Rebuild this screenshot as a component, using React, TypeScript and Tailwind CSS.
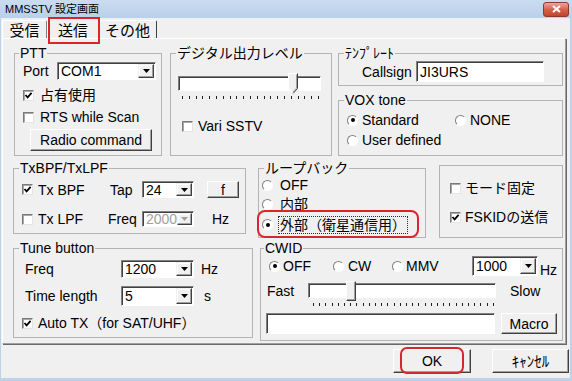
import React from "react";

const FONT = "font-['Liberation_Sans','Noto_Sans_CJK_JP',sans-serif]";

function CheckBox({ checked }: { checked?: boolean }) {
  return (
    <span className="flex h-[11px] w-[11px] shrink-0 items-center justify-center border border-t-[#7a7a7a] border-l-[#7a7a7a] border-r-[#e4e4e4] border-b-[#e4e4e4] bg-white shadow-[inset_1px_1px_0_#a8a8a8]">
      {checked && (
        <svg width="9" height="9" viewBox="0 0 9 9">
          <path d="M1.5 4 L3.6 6.3 L7.6 1.8" fill="none" stroke="#000" strokeWidth="1.8" />
        </svg>
      )}
    </span>
  );
}

function Radio({ checked }: { checked?: boolean }) {
  return (
    <span className="flex h-[11px] w-[11px] shrink-0 items-center justify-center rounded-full border border-t-[#808080] border-l-[#808080] border-r-[#ffffff] border-b-[#ffffff] bg-white">
      {checked && <span className="h-[4px] w-[4px] rounded-full bg-black" />}
    </span>
  );
}

function Combo({ value, className, disabled }: { value: string; className: string; disabled?: boolean }) {
  return (
    <div
      className={`flex shrink-0 border border-t-[#808080] border-l-[#808080] border-r-white border-b-white bg-white p-[1px] shadow-[inset_1px_1px_0_#404040] ${className}`}
    >
      <div className={`flex flex-1 items-center pl-[2px] ${disabled ? "text-[#a0a0a0]" : ""}`}>{value}</div>
      <div className="flex w-[16px] items-center justify-center border border-t-[#f0f0f0] border-l-[#f0f0f0] border-r-[#404040] border-b-[#404040] bg-[#f0f0f0] shadow-[inset_-1px_-1px_0_#a0a0a0,inset_1px_1px_0_#ffffff]">
        <svg width="7" height="4" viewBox="0 0 7 4">
          <path d="M0 0H7L3.5 4Z" fill={disabled ? "#a0a0a0" : "#000"} />
        </svg>
      </div>
    </div>
  );
}

function TextBox({ value, className }: { value: string; className: string }) {
  return (
    <div
      className={`flex shrink-0 items-center border border-t-[#808080] border-l-[#808080] border-r-white border-b-white bg-white pl-[3px] shadow-[inset_1px_1px_0_#404040] ${className}`}
    >
      {value}
    </div>
  );
}

function Btn({ children, className }: { children: React.ReactNode; className: string }) {
  return (
    <div
      className={`flex shrink-0 items-center justify-center border border-t-white border-l-white border-r-[#404040] border-b-[#404040] bg-[#f0f0f0] shadow-[inset_-1px_-1px_0_#a0a0a0] ${className}`}
    >
      {children}
    </div>
  );
}

function Group({
  label,
  className,
  lm,
  children,
}: {
  label: string;
  className: string;
  lm: string;
  children?: React.ReactNode;
}) {
  return (
    <fieldset className={`shrink-0 border border-[#b4b4b4] ${className}`}>
      <legend className={`px-[1px] text-[14px] leading-[14px] ${lm}`}>{label}</legend>
      {children}
    </fieldset>
  );
}

function Ticks({ n, className }: { n: number; className: string }) {
  return (
    <div className={`flex justify-between ${className}`}>
      {Array.from({ length: n }).map((_, i) => (
        <span key={i} className="h-[3px] w-[1px] bg-[#202020]" />
      ))}
    </div>
  );
}

export default function App() {
  return (
    <div
      className={`relative flex h-[381px] w-[572px] flex-col overflow-hidden bg-[#bcd2ea] text-[14px] leading-none text-black ${FONT}`}
    >
      {/* title bar */}
      <div className="flex h-[18px] shrink-0 items-center justify-between bg-gradient-to-b from-[#cadcf0] to-[#b9d0ea] pl-[5px] pr-[3px]">
        <span className="text-[11px] leading-[11px]">MMSSTV 設定画面</span>
        <div className="flex h-[15px] w-[26px] items-center justify-center rounded-[3px] border border-[#8a3a2e] bg-gradient-to-b from-[#eaa898] via-[#d3634c] to-[#c4432b]">
          <svg width="9" height="8" viewBox="0 0 9 8">
            <path d="M1 1 L8 7 M8 1 L1 7" stroke="#fff" strokeWidth="2" />
          </svg>
        </div>
      </div>

      {/* body */}
      <div className="ml-[1px] mr-[2px] flex h-[360px] flex-col bg-[#f0f0f0]">
        {/* tabs */}
        <div className="flex h-[20px] shrink-0 items-end">
          <div className="ml-[1px] flex h-[18px] w-[45px] items-center justify-center rounded-t-[2px] border-t border-l border-r border-t-white border-l-white border-r-[#808080] pt-[2px] text-[15px] leading-[15px]">
            受信
          </div>
          <div className="flex h-[20px] w-[52px] items-center justify-center rounded-t-[2px] border-t border-l border-r border-t-white border-l-white border-r-[#808080] pt-[3px] text-[15px] leading-[15px]">
            送信
          </div>
          <div className="flex h-[18px] w-[58px] items-center justify-center rounded-t-[2px] border-t border-r border-t-white border-r-[#404040] pt-[2px] text-[15px] leading-[15px]">
            その他
          </div>
        </div>

        {/* tab page */}
        <div className="ml-[1px] flex h-[306px] w-[564px] shrink-0 flex-col border border-t-white border-l-white border-r-[#a0a0a0] border-b-[#a0a0a0] shadow-[1px_1px_0_#696969]">
          {/* row 1 */}
          <div className="mt-[7px] flex items-start">
            <Group label="PTT" lm="ml-[4px]" className="ml-[11px] h-[110px] w-[148px]">
              <div className="mt-[2px] flex h-[18px] items-center pl-[8px]">
                <span className="w-[34px]">Port</span>
                <Combo className="h-[18px] w-[99px]" value="COM1" />
              </div>
              <div className="mt-[7px] flex h-[16px] items-center gap-[6px] pl-[8px]">
                <CheckBox checked />
                <span>占有使用</span>
              </div>
              <div className="mt-[6px] flex h-[16px] items-center gap-[6px] pl-[8px]">
                <CheckBox />
                <span>RTS while Scan</span>
              </div>
              <Btn className="ml-[15px] mt-[4px] h-[22px] w-[122px]">Radio command</Btn>
            </Group>

            <Group label="デジタル出力レベル" lm="ml-[5px]" className="ml-[8px] h-[110px] w-[162px]">
              <div className="relative ml-[7px] mt-[16px] h-[15px] w-[143px] border border-t-[#808080] border-l-[#808080] border-r-white border-b-white bg-white shadow-[inset_1px_1px_0_#404040]">
                <div className="absolute left-[109px] top-[-4px]">
                  <svg width="10" height="21" viewBox="0 0 10 21">
                    <path d="M0.5 0.5 H9.5 V15.5 L5 20.5 L0.5 15.5 Z" fill="#f0f0f0" />
                    <path d="M0.5 15.5 V0.5 H9.5" stroke="#ffffff" fill="none" />
                    <path d="M9.5 0.5 V15.5 L5 20.5" stroke="#404040" fill="none" />
                    <path d="M8.5 1.5 V15 L5 19" stroke="#a0a0a0" fill="none" />
                    <path d="M0.5 15.5 L5 20.5" stroke="#ffffff" fill="none" />
                  </svg>
                </div>
              </div>
              <Ticks n={21} className="ml-[11px] mt-[5px] w-[137px]" />
              <div className="mt-[19px] flex h-[16px] items-center gap-[5px] pl-[11px]">
                <CheckBox />
                <span>Vari SSTV</span>
              </div>
            </Group>

            <div className="ml-[6px] flex w-[225px] shrink-0 flex-col">
              <Group label="ﾃﾝﾌﾟﾚｰﾄ" lm="ml-[5px]" className="h-[40px] w-[225px]">
                <div className="mt-[1px] flex h-[21px] items-center pl-[23px]">
                  <span className="w-[54px]">Callsign</span>
                  <TextBox className="h-[21px] w-[128px]" value="JI3URS" />
                </div>
              </Group>
              <Group label="VOX tone" lm="ml-[5px]" className="mt-[7px] h-[63px] w-[225px]">
                <div className="mt-[5px] flex h-[16px] items-center pl-[8px]">
                  <div className="flex w-[108px] items-center gap-[4px]">
                    <Radio checked />
                    <span>Standard</span>
                  </div>
                  <div className="flex items-center gap-[4px]">
                    <Radio />
                    <span>NONE</span>
                  </div>
                </div>
                <div className="mt-[4px] flex h-[16px] items-center gap-[4px] pl-[8px]">
                  <Radio />
                  <span>User defined</span>
                </div>
              </Group>
            </div>
          </div>

          {/* row 2 */}
          <div className="mt-[5px] flex items-start">
            <Group label="TxBPF/TxLPF" lm="ml-[5px]" className="ml-[10px] h-[73px] w-[233px]">
              <div className="mt-[6px] flex h-[17px] items-center pl-[8px]">
                <div className="flex w-[88px] items-center gap-[5px]">
                  <CheckBox checked />
                  <span>Tx BPF</span>
                </div>
                <span className="w-[32px]">Tap</span>
                <Combo className="h-[17px] w-[52px]" value="24" />
                <Btn className="ml-[13px] h-[17px] w-[32px]">f</Btn>
              </div>
              <div className="mt-[13px] flex h-[16px] items-center pl-[8px]">
                <div className="flex w-[86px] items-center gap-[5px]">
                  <CheckBox />
                  <span>Tx LPF</span>
                </div>
                <span className="w-[34px]">Freq</span>
                <Combo className="h-[16px] w-[52px]" value="2000" disabled />
                <span className="ml-[18px]">Hz</span>
              </div>
            </Group>

            <Group label="ループバック" lm="ml-[5px]" className="ml-[12px] h-[77px] w-[168px]">
              <div className="mt-[2px] flex h-[16px] items-center gap-[7px] pl-[3px]">
                <Radio />
                <span>OFF</span>
              </div>
              <div className="mt-[3px] flex h-[16px] items-center gap-[7px] pl-[3px]">
                <Radio />
                <span>内部</span>
              </div>
              <div className="mt-[4px] flex h-[17px] items-center gap-[5px] pl-[3px]">
                <Radio checked />
                <span className="border border-dotted border-[#303030] px-[1px] py-[1px]">外部（衛星通信用）</span>
              </div>
            </Group>

            <div className="ml-[13px] mt-[4px] h-[73px] w-[124px] shrink-0 border border-[#b4b4b4]">
              <div className="mt-[14px] flex h-[16px] items-center gap-[4px] pl-[10px]">
                <CheckBox />
                <span>モード固定</span>
              </div>
              <div className="mt-[13px] flex h-[16px] items-center gap-[4px] pl-[10px]">
                <CheckBox checked />
                <span>FSKIDの送信</span>
              </div>
            </div>
          </div>

          {/* row 3 */}
          <div className="mt-[3px] flex items-start">
            <Group label="Tune button" lm="ml-[5px]" className="ml-[10px] h-[97px] w-[240px]">
              <div className="mt-[5px] flex h-[18px] items-center pl-[11px]">
                <span className="w-[96px]">Freq</span>
                <Combo className="h-[18px] w-[73px]" value="1200" />
                <span className="ml-[7px]">Hz</span>
              </div>
              <div className="mt-[8px] flex h-[20px] items-center pl-[11px]">
                <span className="w-[96px]">Time length</span>
                <Combo className="h-[20px] w-[73px]" value="5" />
                <span className="ml-[10px]">s</span>
              </div>
              <div className="mt-[9px] flex h-[16px] items-center gap-[5px] pl-[8px]">
                <CheckBox checked />
                <span>Auto TX（for SAT/UHF）</span>
              </div>
            </Group>

            <Group label="CWID" lm="ml-[3px]" className="ml-[7px] h-[100px] w-[303px]">
              <div className="mt-[1px] flex h-[20px] items-center pl-[8px]">
                <div className="flex w-[64px] items-center gap-[3px]">
                  <Radio checked />
                  <span>OFF</span>
                </div>
                <div className="flex w-[59px] items-center gap-[4px]">
                  <Radio />
                  <span>CW</span>
                </div>
                <div className="flex w-[80px] items-center gap-[3px]">
                  <Radio />
                  <span>MMV</span>
                </div>
                <Combo className="h-[20px] w-[66px]" value="1000" />
                <span className="ml-[2px] mt-[8px]">Hz</span>
              </div>
              <div className="mt-[7px] flex h-[15px] items-center">
                <span className="ml-[6px] w-[41px]">Fast</span>
                <div className="relative h-[15px] w-[188px] shrink-0 border border-t-[#808080] border-l-[#808080] border-r-white border-b-white bg-white shadow-[inset_1px_1px_0_#404040]">
                  <div className="absolute left-[37px] top-[-3px] h-[20px] w-[10px] border border-t-white border-l-white border-r-[#404040] border-b-[#404040] bg-[#f0f0f0] shadow-[inset_-1px_-1px_0_#a0a0a0]" />
                </div>
                <span className="ml-[14px]">Slow</span>
              </div>
              <Ticks n={30} className="ml-[52px] mt-[5px] w-[181px]" />
              <div className="mt-[7px] flex items-center">
                <TextBox className="ml-[5px] h-[21px] w-[229px]" value="" />
                <Btn className="ml-[6px] h-[21px] w-[56px]">Macro</Btn>
              </div>
            </Group>
          </div>
        </div>

        {/* bottom buttons */}
        <div className="mt-[5px] flex">
          <Btn className="ml-[392px] h-[24px] w-[78px]">OK</Btn>
          <Btn className="ml-[21px] h-[24px] w-[77px] text-[15px]">ｷｬﾝｾﾙ</Btn>
        </div>
      </div>

      {/* red annotation marks */}
      <div className="absolute left-[48px] top-[17px] h-[27px] w-[52px] border-2 border-[#d8262c]" />
      <div className="absolute left-[257px] top-[210px] h-[28px] w-[162px] rounded-[8px] border-2 border-[#d8262c]" />
      <div className="absolute left-[400px] top-[347px] h-[27px] w-[64px] rounded-[7px] border-2 border-[#d8262c]" />
    </div>
  );
}
